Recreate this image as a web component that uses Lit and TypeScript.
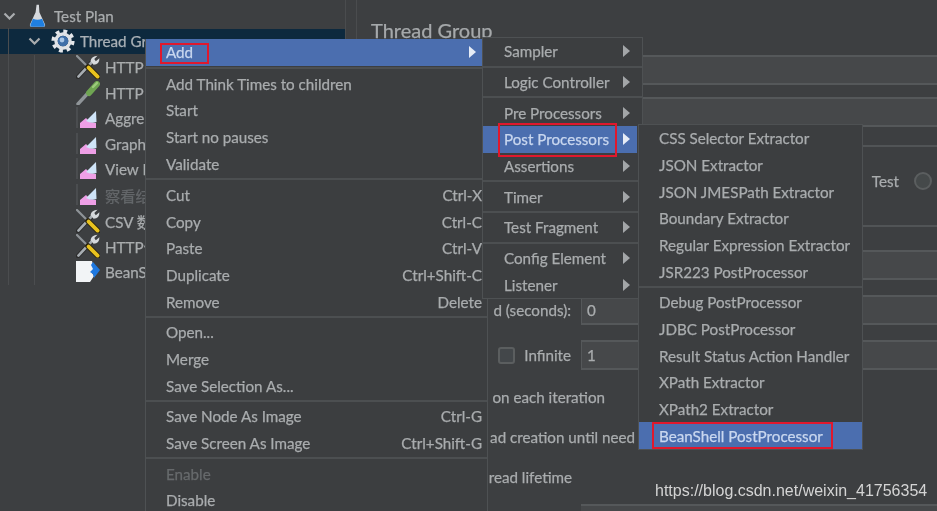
import { LitElement, html, css, svg } from "lit";
import { customElement } from "lit/decorators.js";

type Item = { t?: string; k?: string; sub?: boolean; on?: boolean; off?: boolean; mark?: string; sep?: string };

const MAIN: Item[] = [
  { t: "Add", sub: true, on: true, mark: "m-add" },
  { sep: "s5" },
  { t: "Add Think Times to children" }, { t: "Start" }, { t: "Start no pauses" }, { t: "Validate" },
  { sep: "s5" },
  { t: "Cut", k: "Ctrl-X" }, { t: "Copy", k: "Ctrl-C" }, { t: "Paste", k: "Ctrl-V" },
  { t: "Duplicate", k: "Ctrl+Shift-C" }, { t: "Remove", k: "Delete" },
  { sep: "s4" },
  { t: "Open..." }, { t: "Merge" }, { t: "Save Selection As..." },
  { sep: "s4" },
  { t: "Save Node As Image", k: "Ctrl-G" }, { t: "Save Screen As Image", k: "Ctrl+Shift-G" },
  { sep: "s4" },
  { t: "Enable", off: true }, { t: "Disable" },
];
const SUB1: Item[] = [
  { t: "Sampler", sub: true }, { sep: "s3" },
  { t: "Logic Controller", sub: true }, { sep: "s3" },
  { t: "Pre Processors", sub: true },
  { t: "Post Processors", sub: true, on: true, mark: "m-post" },
  { t: "Assertions", sub: true }, { sep: "s3" },
  { t: "Timer", sub: true }, { sep: "s3" },
  { t: "Test Fragment", sub: true }, { sep: "s3" },
  { t: "Config Element", sub: true }, { t: "Listener", sub: true },
];
const SUB2: Item[] = [
  { t: "CSS Selector Extractor" }, { t: "JSON Extractor" }, { t: "JSON JMESPath Extractor" },
  { t: "Boundary Extractor" }, { t: "Regular Expression Extractor" }, { t: "JSR223 PostProcessor" },
  { sep: "s4" },
  { t: "Debug PostProcessor" }, { t: "JDBC PostProcessor" }, { t: "Result Status Action Handler" },
  { t: "XPath Extractor" }, { t: "XPath2 Extractor" },
  { t: "BeanShell PostProcessor", on: true, mark: "m-bean" },
];

const flask = html`<svg class="ic flask" viewBox="0 0 18 24">
  <path d="M8 0 L10.5 0 L11 8 L17 21 Q17.5 23.5 15 23.5 L3 23.5 Q0.5 23.5 1 21 L7 8 Z" fill="#d7dade"/>
  <path d="M4.2 15 Q9 17 13.8 15 L16.6 21.5 Q16.8 23.5 15 23.5 L3 23.5 Q1.2 23.5 1.4 21.5 Z" fill="#1f7fe0"/>
</svg>`;
const gear = html`<svg class="ic gear" viewBox="0 0 24 24">
  <circle cx="12" cy="12" r="9.6" fill="none" stroke="#e4e6ea" stroke-width="4" stroke-dasharray="3.8 3.74"/>
  <circle cx="12" cy="12" r="7" fill="none" stroke="#dfe2e6" stroke-width="3.4"/>
  <circle cx="12" cy="12" r="5.3" fill="#3f6fa8"/>
  <circle cx="11" cy="11" r="2.4" fill="#a9c6e6"/>
</svg>`;
const tools = html`<svg class="ic" viewBox="0 0 24 24">
  <path d="M2 22 L16 7" stroke="#2b2b2b" stroke-width="4.4" stroke-linecap="round"/>
  <path d="M2.4 21.6 L16 7" stroke="#a7adb2" stroke-width="2.6" stroke-linecap="round"/>
  <path d="M14.5 6 Q15.5 1 21.5 0.8 L18.3 4 L19.8 6.2 L23.4 3.2 Q23.6 9.4 17.6 9.8 Z" fill="#d6d9dc"/>
  <path d="M1 1 L13 13" stroke="#8f9498" stroke-width="2.2" stroke-linecap="round"/>
  <path d="M12 12 L22 22" stroke="#2a2412" stroke-width="5.6" stroke-linecap="round"/>
  <path d="M12.6 12.6 L21.6 21.6" stroke="#e9c21e" stroke-width="3.8" stroke-linecap="round"/>
</svg>`;
const dropper = html`<svg class="ic" viewBox="0 0 24 24">
  <path d="M2 23 L13 11" stroke="#8f9498" stroke-width="3.4" stroke-linecap="round"/>
  <path d="M13 12 L21 3" stroke="#6fa552" stroke-width="6" stroke-linecap="round"/>
  <path d="M17 6 L21 2" stroke="#9ccb7c" stroke-width="2.4" stroke-linecap="round"/>
</svg>`;
const chart = html`<svg class="ic" viewBox="0 0 24 24">
  <path d="M1 1 V22" stroke="#55585a" stroke-width="1.2"/>
  <path d="M4 22 V17 L10 12 L14 16 L20 17 V22 Z" fill="#ee9fe6"/>
  <path d="M10 15 L20 5 L20.5 16 Q15 18 10 15 Z" fill="#cfe4f8"/>
</svg>`;
const bean = html`<svg class="ic" viewBox="0 0 24 24">
  <path d="M0 1 H16 L18 8 L16 13 L18 16 L14 22 H0 Z" fill="#f2f4f6"/>
  <path d="M17 2 L24 10 L18 18 L17 14 L14 12 L17 9 L15 5 Z" fill="#1e78e0"/>
</svg>`;

type Row = { lv: string; icon: unknown; text: string; chev?: boolean; sel?: boolean; dim?: boolean };
const ROWS: Row[] = [
  { lv: "l0", icon: flask, text: "Test Plan", chev: true },
  { lv: "l1", icon: gear, text: "Thread Gr", chev: true, sel: true },
  { lv: "l2", icon: tools, text: "HTTP" },
  { lv: "l2", icon: dropper, text: "HTTP" },
  { lv: "l2", icon: chart, text: "Aggre" },
  { lv: "l2", icon: chart, text: "Graph" },
  { lv: "l2", icon: chart, text: "View R" },
  { lv: "l2", icon: chart, text: "察看结", dim: true },
  { lv: "l2", icon: tools, text: "CSV 数" },
  { lv: "l2", icon: tools, text: "HTTP信" },
  { lv: "l2", icon: bean, text: "BeanS" },
];

@customElement("app-root")
export class AppRoot extends LitElement {
  static styles = css`
    :host { display: block; width: 937px; height: 511px; overflow: hidden; position: relative; background: #3d3f41; }
    * { box-sizing: border-box; }
    .app {
      width: 937px; height: 511px; display: flex; overflow: hidden; position: relative;
      font-family: Lato, "Noto Sans CJK SC", sans-serif; font-size: 15.2px; font-weight: 400; color: #a9acae;
      -webkit-text-stroke: 0.25px currentColor;
      background: #3d3f41; filter: blur(0.45px);
    }
    .tree { width: 346px; flex: none; padding-top: 3px; position: relative; border-right: 1px solid #4a4c4e; }
    .guide { position: absolute; width: 1px; background: #4b4d4f; bottom: 226px; }
    .g1 { left: 8px; top: 28px; }
    .g2 { left: 34px; top: 55px; }
    .row { height: 25.6px; display: flex; align-items: center; white-space: nowrap; position: relative; }
    .row.sel { background: #0d293e; color: #a9b0b6; }
    .row.dim { color: #64676a; }
    .l0 { padding-left: 3px; }
    .l1 { padding-left: 28px; }
    .l2 { padding-left: 76px; }
    .chev { width: 13px; height: 8px; flex: none; }
    .l0 .chev { margin-right: 13px; }
    .l1 .chev { margin-right: 10px; }
    .ic { width: 24px; height: 24px; flex: none; margin-right: 5px; }
    .flask { width: 17px; height: 24px; margin-right: 8px; }
    .gear { margin-right: 5px; }
    .split { width: 11px; flex: none; border-right: 1px solid #4a4c4e; }
    .panel { flex: 1; min-width: 0; padding: 19px 0 0 14px; overflow: hidden; white-space: nowrap; }
    .title { font-size: 20px; line-height: 22px; font-weight: 400; color: #a6a9ab; }
    .field { height: 30px; background: #46484a; border-top: 2px solid #55585a; border-bottom: 2px solid #55585a; }
    .f1 { margin-top: 14px; }
    .f2 { margin-top: 12px; }
    .section { margin-top: 18px; height: 82px; border-top: 2px solid #515456; border-bottom: 2px solid #515456;
      padding: 24px 5px 0 0; display: flex; justify-content: flex-end; align-items: flex-start; gap: 15px; }
    .section > span:first-child { height: 20px; line-height: 20px; }
    .radio { width: 18px; height: 18px; margin-top: 1px; border-radius: 50%; border: 2px solid #5b5e5f; background: #45494a; }
    .grid { display: grid; grid-template-columns: 200px 1fr; column-gap: 10px; align-items: center; }
    .g-a { margin-top: 23px; }
    .g-b { margin-top: 15px; }
    .lab { display: flex; justify-content: flex-end; align-items: center; gap: 9px; }
    .val { padding-left: 5px; line-height: 26px; border-left: 1px solid #55585a; }
    .check { width: 17px; height: 17px; border: 2px solid #5b5e5f; border-radius: 3px; background: #43474a; }
    .opt { height: 40px; line-height: 40px; text-align: right; }
    .o1 { margin-top: 7px; width: 234px; }
    .o2 { width: 264px; }
    .o3 { width: 201px; }
    .f-last { margin-top: 7px; margin-left: 210px; }

    .menu { position: absolute; background: #3c3e40; border: 1px solid #4e5153; white-space: nowrap; }
    .main { left: 145px; top: 39px; width: 343px; height: 480px; border-top: 0; }
    .s1 { left: 482px; top: 37px; width: 161px; }
    .s2 { left: 638px; top: 124px; width: 225px; }
    .it { height: 26.67px; display: flex; align-items: center; position: relative; justify-content: space-between; }
    .main .it { padding: 0 5px 0 20px; }
    .s1 .it { padding: 0 12px 0 21px; }
    .s2 .it { padding: 0 10px 0 20px; }
    .it.on { background: #4b6eaf; color: #c9d7ef; }
    .it.off { color: #676a6c; }
    .sep { display: flex; align-items: center; }
    .sep::before { content: ""; display: block; height: 2px; width: 100%; background: #4c4f51; }
    .s3 { height: 4px; }
    .s4 { height: 4px; }
    .s5 { height: 4.7px; }
    .main .on { margin-right: 5px; padding-right: 6px !important; }
    .s1 .on { margin-right: 5px; padding-right: 7px !important; }
    .arrow { width: 0; height: 0; border-left: 7px solid #a3a6a8; border-top: 6px solid transparent; border-bottom: 6px solid transparent; }
    .on .arrow { border-left-color: #e6ecf6; }
    .mark { position: absolute; border: 2px solid #e0182d; pointer-events: none; }
    .m-add { left: 14px; top: 4px; width: 49px; height: 21px; }
    .m-post { left: 15px; top: -3px; width: 119px; height: 34px; }
    .m-bean { left: 13px; top: 0; width: 181px; height: 27px; }
    .wm { position: absolute; left: 655px; top: 481px; font: 16px/20px "Liberation Sans", sans-serif; color: #d4d4d4; white-space: nowrap; filter: blur(0.3px); }
  `;

  private items(list: Item[]) {
    return list.map((i) =>
      i.sep
        ? html`<div class="sep ${i.sep}"></div>`
        : html`<div class="it ${i.on ? "on" : ""} ${i.off ? "off" : ""}">
            <span>${i.t}</span>
            ${i.k ? html`<span>${i.k}</span>` : ""}
            ${i.sub ? html`<span class="arrow"></span>` : ""}
            ${i.mark ? html`<span class="mark ${i.mark}"></span>` : ""}
          </div>`
    );
  }

  render() {
    const chev = svg`<path d="M1.5 1.5 L6.5 6.5 L11.5 1.5" fill="none" stroke="#a9acae" stroke-width="2.2"/>`;
    return html`<div class="app">
        <div class="tree">
          ${ROWS.map(
            (r) => html`<div class="row ${r.lv} ${r.sel ? "sel" : ""} ${r.dim ? "dim" : ""}">
              ${r.chev ? html`<svg class="chev" viewBox="0 0 13 8">${chev}</svg>` : ""}
              ${r.icon}<span class="name">${r.text}</span>
            </div>`
          )}
          <div class="guide g1"></div>
          <div class="guide g2"></div>
        </div>
        <div class="split"></div>
        <div class="panel">
          <div class="title">Thread Group</div>
          <div class="field f1"></div>
          <div class="field f2"></div>
          <div class="section">
            <span>Test</span><span class="radio"></span>
          </div>
          <div class="grid g-a"><div class="lab"></div><div class="field val"></div></div>
          <div class="grid g-b"><div class="lab">d (seconds):</div><div class="field val">0</div></div>
          <div class="grid g-b"><div class="lab"><span class="check"></span><span>Infinite</span></div><div class="field val">1</div></div>
          <div class="opt o1">on each iteration</div>
          <div class="opt o2">ad creation until need</div>
          <div class="opt o3">read lifetime</div>
          <div class="field f-last"></div>
        </div>
        <div class="menu main">${this.items(MAIN)}</div>
        <div class="menu s1">${this.items(SUB1)}</div>
        <div class="menu s2">${this.items(SUB2)}</div>
      </div>
      <div class="wm">https://blog.csdn.net/weixin_41756354</div>`;
  }
}
